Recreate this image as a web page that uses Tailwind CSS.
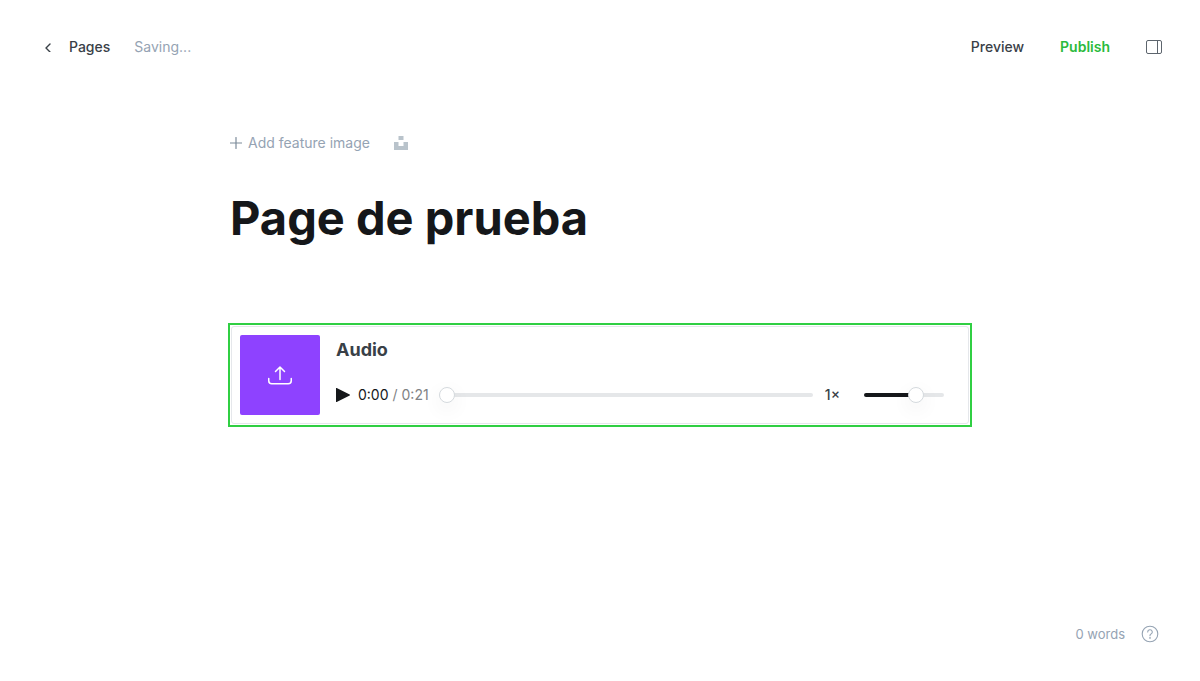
<!DOCTYPE html>
<html lang="es">
<head>
<meta charset="utf-8">
<meta name="viewport" content="width=device-width, initial-scale=1">
<title>Page de prueba</title>
<script src="https://cdn.jsdelivr.net/npm/@tailwindcss/browser@4"></script>
</head>
<body class="flex min-h-screen flex-col bg-white font-['Inter',sans-serif] text-[#394047] antialiased">
  <header class="flex items-center justify-between pt-8 pr-[38px] pl-11">
    <div class="flex h-[30px] items-center gap-6 text-sm">
      <a href="#pages" class="flex items-center gap-4 font-medium">
        <svg class="h-[9px] w-[9px]" viewBox="0 0 9 9" fill="none" stroke="currentColor" stroke-width="1.4" stroke-linecap="round" stroke-linejoin="round" aria-hidden="true"><path d="M6 1 2 5l4 4"/></svg>
        Pages
      </a>
      <span class="text-[#95a3b3]">Saving...</span>
    </div>
    <div class="flex h-[30px] items-center gap-9 text-sm">
      <button type="button" class="font-medium">Preview</button>
      <button type="button" class="font-semibold text-[#2bba3c]">Publish</button>
      <button type="button" aria-label="Settings">
        <svg class="h-4 w-4" viewBox="0 0 16 16" fill="none" stroke="#5d656d" aria-hidden="true"><rect x=".5" y="1.5" width="15" height="13" rx="1.5"/><path d="M11.5 1.5v13"/></svg>
      </button>
    </div>
  </header>

  <main class="mx-auto mt-[69px] w-full max-w-[744px] grow">
    <div class="flex h-6 items-center gap-6 text-sm text-[#95a3b3]">
      <button type="button" class="flex items-center gap-1.5">
        <svg class="ml-0.5 h-3 w-3" viewBox="0 0 12 12" fill="none" stroke="#7c8b9a" stroke-width="1.2" stroke-linecap="round" aria-hidden="true"><path d="M6 .5v11M.5 6h11"/></svg>
        Add feature image
      </button>
      <button type="button" aria-label="Choose an Unsplash image">
        <svg class="h-3.5 w-3.5" viewBox="0 0 14 14" fill="#b9c3cb" aria-hidden="true"><path d="M4.5 0h5v4h-5zM0 6h4.5v4h5V6H14v8H0z"/></svg>
      </button>
    </div>

    <h1 class="mt-8 pl-0.5 text-[47px]/[62px] font-bold text-[#15171a]">Page de prueba</h1>

    <section aria-label="Audio" class="mt-[74px] border-2 border-[#30cf43] p-px">
      <div class="flex gap-4 rounded-[3px] border border-[#e5e7eb] p-2">
        <button type="button" aria-label="Upload thumbnail" class="flex h-20 w-20 shrink-0 items-center justify-center rounded-xs bg-[#8e42ff]">
          <svg class="h-6 w-6" viewBox="0 0 24 24" fill="none" stroke="#fff" stroke-width="1.5" stroke-linecap="round" stroke-linejoin="round" aria-hidden="true"><path d="M.75 15.5v2.25a3 3 0 0 0 3 3h16.5a3 3 0 0 0 3-3V15.5M12 16.5V4M7.5 8.5 12 4l4.5 4.5"/></svg>
        </button>
        <div class="flex grow flex-col justify-between pt-[3px] pr-4">
          <h2 class="text-lg/6 font-bold">Audio</h2>
          <div class="mb-2 flex h-6 items-center text-sm">
            <button type="button" aria-label="Play" class="mr-2">
              <svg class="h-3.5 w-3.5" viewBox="0 0 14 14" fill="#15171a" aria-hidden="true"><path d="M0 .4Q0-.3.7.1L13.7 6.5q.6.5 0 1L.7 13.9Q0 14.3 0 13.6z"/></svg>
            </button>
            <span class="text-[#15171a]">0:00</span>
            <span class="ml-1 text-[#808284]">/ 0:21</span>
            <input type="range" aria-label="Position" min="0" max="21" value="0" class="mr-3 ml-2.5 h-1 min-w-0 grow appearance-none rounded-xs bg-[#e5e7e9] [&::-webkit-slider-thumb]:h-4 [&::-webkit-slider-thumb]:w-4 [&::-webkit-slider-thumb]:appearance-none [&::-webkit-slider-thumb]:rounded-full [&::-webkit-slider-thumb]:border [&::-webkit-slider-thumb]:border-[#d5dade] [&::-webkit-slider-thumb]:bg-white [&::-webkit-slider-thumb]:shadow-[0_6px_20px_rgb(0_0_0/0.07)]">
            <button type="button" aria-label="Playback speed" class="font-medium">1×</button>
            <input type="range" aria-label="Volume" min="0" max="64" value="44" class="ml-6 h-1 w-20 appearance-none rounded-xs bg-linear-to-r from-[#15171a] from-65% to-[#e5e7e9] to-65% [&::-webkit-slider-thumb]:h-4 [&::-webkit-slider-thumb]:w-4 [&::-webkit-slider-thumb]:appearance-none [&::-webkit-slider-thumb]:rounded-full [&::-webkit-slider-thumb]:border [&::-webkit-slider-thumb]:border-[#d5dade] [&::-webkit-slider-thumb]:bg-white [&::-webkit-slider-thumb]:shadow-[0_6px_20px_rgb(0_0_0/0.07)]">
          </div>
        </div>
      </div>
    </section>
  </main>

  <footer class="flex items-center justify-end gap-4 pr-[41px] pb-[35px] text-[13px]/6 text-[#95a3b3]">
    <span>0 words</span>
    <a href="#help" aria-label="Help">
      <svg class="h-[18px] w-[18px]" viewBox="0 0 18 18" fill="none" stroke="#95a3b3" stroke-width="1.1" stroke-linecap="round" stroke-linejoin="round" aria-hidden="true"><circle cx="9" cy="9" r="7.8"/><path d="M6.7 7a2.3 2.3 0 1 1 3.3 2.1c-.7.3-1 .7-1 1.4v.3"/><circle cx="9" cy="12.9" r=".3" fill="#95a3b3"/></svg>
    </a>
  </footer>
</body>
</html>
